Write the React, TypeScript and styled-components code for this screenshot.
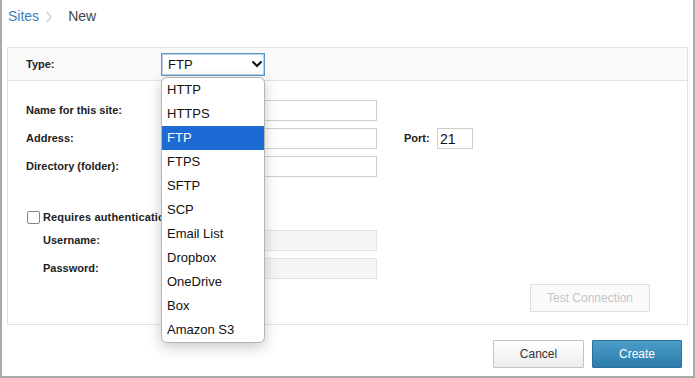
import React from 'react'
import styled, { createGlobalStyle } from 'styled-components'

const GlobalStyle = createGlobalStyle`
  html, body {
    margin: 0;
    padding: 0;
    background: #fff;
  }
  * {
    box-sizing: border-box;
  }
`

const siteTypes = ['HTTP', 'HTTPS', 'FTP', 'FTPS', 'SFTP', 'SCP', 'Email List', 'Dropbox', 'OneDrive', 'Box', 'Amazon S3']

const Chevron = () => (
  <svg width="10" height="7" viewBox="0 0 10 7">
    <path d="M1.2 1.2 L5 5 L8.8 1.2" fill="none" stroke="#111" strokeWidth="2.2" strokeLinecap="square" />
  </svg>
)

const CrumbChevron = () => (
  <svg width="6" height="12" viewBox="0 0 6 12">
    <path d="M0.8 0.8 L5 6 L0.8 11.2" fill="none" stroke="#c2c2c2" strokeWidth="1.1" />
  </svg>
)

const App = () => {
  const selected = 'FTP'

  return (
    <Page>
      <GlobalStyle />
      <Breadcrumb>
        <CrumbLink>Sites</CrumbLink>
        <CrumbSep>
          <CrumbChevron />
        </CrumbSep>
        <CrumbCurrent>New</CrumbCurrent>
      </Breadcrumb>

      <Panel>
        <HeaderRow>
          <Label>Type:</Label>
          <SelectWrap>
            <SelectBox>
              <span>{selected}</span>
              <Chevron />
            </SelectBox>
            <Menu>
              {siteTypes.map((t) => (
                <MenuItem key={t} active={t === selected}>
                  {t}
                </MenuItem>
              ))}
            </Menu>
          </SelectWrap>
        </HeaderRow>

        <Body>
          <Row>
            <Label>Name for this site:</Label>
            <Input />
          </Row>
          <Row>
            <Label>Address:</Label>
            <Input />
            <PortLabel>Port:</PortLabel>
            <PortInput defaultValue="21" />
          </Row>
          <Row>
            <Label>Directory (folder):</Label>
            <Input />
          </Row>

          <CheckRow>
            <CheckBox />
            <CheckText>Requires authentication</CheckText>
          </CheckRow>
          <Row>
            <Label indent>Username:</Label>
            <Input disabled />
          </Row>
          <Row>
            <Label indent>Password:</Label>
            <Input disabled />
          </Row>

          <TestRow>
            <TestButton disabled>Test Connection</TestButton>
          </TestRow>
        </Body>
      </Panel>

      <Footer>
        <CancelButton>Cancel</CancelButton>
        <CreateButton>Create</CreateButton>
      </Footer>
    </Page>
  )
}

const font = `'Liberation Sans', Arial, sans-serif`

const Page = styled.div`
  width: 695px;
  height: 378px;
  border: 2px solid #a9a9a9;
  border-top: none;
  font-family: ${font};
  display: flex;
  flex-direction: column;
  overflow: hidden;
`
const Breadcrumb = styled.div`
  height: 47px;
  padding: 7px 0 0 6px;
  display: flex;
  align-items: flex-start;
  font-size: 14px;
  line-height: 18px;
`
const CrumbLink = styled.span`
  color: #3b7db9;
`
const CrumbSep = styled.span`
  display: flex;
  align-items: center;
  height: 18px;
  margin: 1px 16px 0 7px;
`
const CrumbCurrent = styled.span`
  color: #444;
`
const Panel = styled.div`
  margin: 0 5px;
  border: 1px solid #e2e2e2;
  display: flex;
  flex-direction: column;
`
const HeaderRow = styled.div`
  height: 33px;
  background: #f9f9f9;
  border-bottom: 1px solid #e2e2e2;
  display: flex;
  align-items: center;
  padding-left: 18px;
`
const Label = styled.label<{ indent?: boolean }>`
  width: ${(p) => (p.indent ? 118 : 135)}px;
  margin-left: ${(p) => (p.indent ? 17 : 0)}px;
  font-size: 11px;
  font-weight: 700;
  color: #222;
  flex-shrink: 0;
`
const SelectWrap = styled.div`
  position: relative;
  width: 104px;
`
const SelectBox = styled.div`
  height: 23px;
  border: 1px solid #5d98c4;
  box-shadow: 0 0 0 1px #b7d3ea inset;
  background: #fff;
  display: flex;
  align-items: center;
  justify-content: space-between;
  padding: 0 2px 0 6px;
  font-size: 13px;
  color: #111;
`
const Menu = styled.div`
  position: absolute;
  top: 24px;
  left: 0;
  width: 104px;
  background: #fff;
  border: 1px solid #b5b5b5;
  border-radius: 6px;
  box-shadow: 0 4px 14px rgba(0, 0, 0, 0.22);
  overflow: hidden;
  z-index: 10;
`
const MenuItem = styled.div<{ active?: boolean }>`
  height: 24px;
  line-height: 24px;
  padding-left: 5px;
  font-size: 13px;
  color: ${(p) => (p.active ? '#fff' : '#111')};
  background: ${(p) => (p.active ? '#1c6ad4' : 'transparent')};
`
const Body = styled.div`
  padding: 15px 37px 12px 18px;
  display: flex;
  flex-direction: column;
`
const Row = styled.div`
  height: 28px;
  display: flex;
  align-items: center;
`
const Input = styled.input`
  width: 216px;
  height: 21px;
  border: 1px solid #cfcfcf;
  background: #fff;
  font-family: ${font};
  font-size: 13px;
  padding: 0 4px;
  outline: none;

  &:disabled {
    background: #f5f5f5;
    border-color: #e3e3e3;
  }
`
const PortLabel = styled.label`
  margin-left: 27px;
  width: 33px;
  font-size: 11px;
  font-weight: 700;
  color: #222;
`
const PortInput = styled(Input)`
  width: 36px;
  font-size: 14px;
  color: #111;
  padding: 2px 0 0 2px;
`
const CheckRow = styled.div`
  margin-top: 28px;
  height: 18px;
  display: flex;
  align-items: center;
`
const CheckBox = styled.span`
  width: 13px;
  height: 13px;
  border: 1px solid #858585;
  border-radius: 2px;
  background: #fff;
  margin-left: 1px;
`
const CheckText = styled.span`
  margin-left: 3px;
  font-size: 11px;
  font-weight: 700;
  color: #222;
  letter-spacing: 0.15px;
`
const TestRow = styled.div`
  margin-top: 2px;
  display: flex;
  justify-content: flex-end;
`
const TestButton = styled.button`
  width: 120px;
  height: 28px;
  border: 1px solid #dedede;
  background: #fafafa;
  color: #c6c6c6;
  font-family: ${font};
  font-size: 12px;
`
const Footer = styled.div`
  display: flex;
  justify-content: flex-end;
  gap: 8px;
  padding: 15px 11px 0 0;
`
const CancelButton = styled.button`
  width: 91px;
  height: 28px;
  border: 1px solid #c2c2c2;
  border-radius: 1px;
  background: linear-gradient(#ffffff, #ececec);
  color: #333;
  font-family: ${font};
  font-size: 12px;
`
const CreateButton = styled.button`
  width: 90px;
  height: 28px;
  border: 1px solid #2c6f98;
  border-radius: 1px;
  background: linear-gradient(#4d9dc9, #2c7cab);
  color: #fff;
  font-family: ${font};
  font-size: 12px;
`

export default App
